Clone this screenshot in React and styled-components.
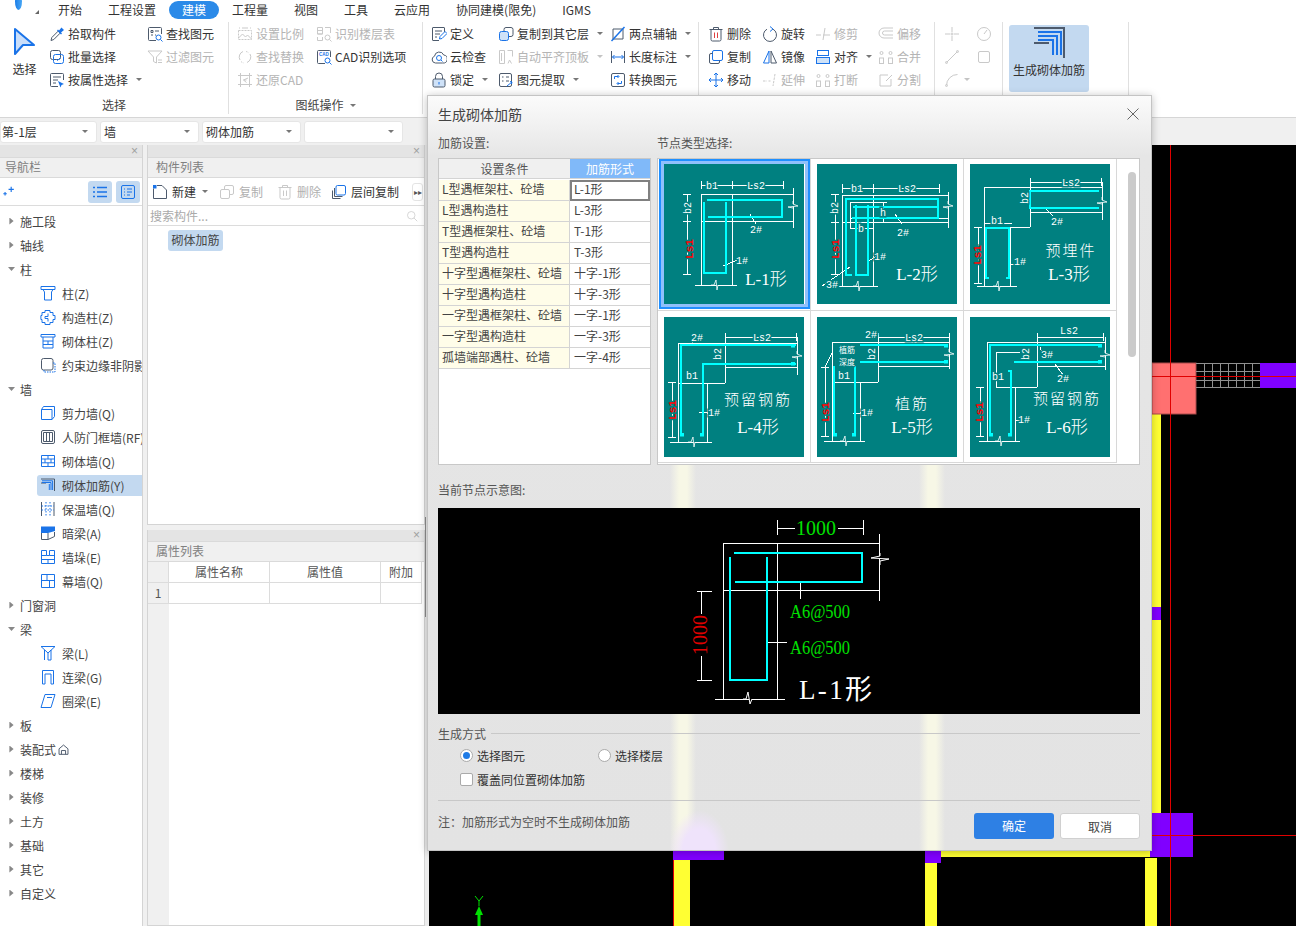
import React from 'react';
import styled, { createGlobalStyle } from 'styled-components';

const GlobalStyle = createGlobalStyle`
  html, body { margin: 0; padding: 0; background: #f0f0f0; }
  body { font-family: "Noto Sans CJK SC", "Liberation Sans", sans-serif; font-size: 12px; color: #333; }
  *, *::before, *::after { box-sizing: border-box; }
`;

const ICONS = {
  pick: <><path d="M2 14.5l.8-3 6.4-6.4 2 2-6.4 6.4z" /><path className="f" d="M9 3.5l1 1 2.5-3 2.5 2.5-3 2.5 1 1-1 1-4-4z" /></>,
  batch: <><rect x="1.5" y="1.5" width="10" height="9" rx="2" /><rect className="a" x="4.5" y="5.5" width="10" height="9" rx="2" /><path className="a" d="M7 10l1.5 1.5 3-3" /></>,
  attr: <><path d="M9 14.5H2.5a1 1 0 0 1-1-1v-11a1 1 0 0 1 1-1h11a1 1 0 0 1 1 1V8" /><path d="M4 5h8M4 8h5M4 11h3" /><path className="f" d="M9 9l6 3-2.5 1-1 2.5z" /></>,
  find: <><path d="M9 14.5H2.5a1 1 0 0 1-1-1v-11a1 1 0 0 1 1-1h11a1 1 0 0 1 1 1V8" /><path d="M4 4.5h2v2H4zM8 5h4M4 9h2M8 9h1" /><circle className="a" cx="11.5" cy="11.5" r="2.5" /><path className="a" d="M13.5 13.5l2 2" /></>,
  filter: <><path d="M1 2h14l-5.5 6v6l-3-1.5V8z" /><path d="M11 11h4M11 13.5h4" /></>,
  scale: <><path strokeDasharray="2 1" d="M1.5 4.5h13v9h-13z" /><path d="M1.5 12l4-4 3 3 2-2 4 4" /><path d="M2 2h1M13 2h1M5 2h6" /></>,
  replace: <><path d="M3 11A6 6 0 0 1 6 2.5M13 5a6 6 0 0 1-3 8.5" /><path strokeDasharray="1.5 1.5" d="M9 2.5a6 6 0 0 1 3 1.5M4 12.5A6 6 0 0 0 7 14" /></>,
  restore: <><path d="M1 3.5h14M1 12.5h14M3.5 1v14M12.5 1v14" /><path d="M11 6L6.5 8l3 2.5M6.5 8h3" /></>,
  layer: <><path d="M1.5 8V1.5h5V8zM1.5 4.5h5M9 1.5h5.5V7M1.5 11v3.5h5V11M1.5 8h5" /><circle cx="11.5" cy="11.5" r="2.5" /><path d="M13.5 13.5l2 2" /></>,
  cad: <><path d="M9 14.5H2.5a1 1 0 0 1-1-1v-11a1 1 0 0 1 1-1h11a1 1 0 0 1 1 1V8" /><text x="3" y="7" fontSize="4.5" fontWeight="700" fill="#1a73e8" stroke="none" fontFamily="Liberation Sans, sans-serif">CAD</text><circle className="a" cx="11.5" cy="11.5" r="2.5" /><path className="a" d="M13.5 13.5l2 2" /></>,
  define: <><path d="M13.5 6V2a.5.5 0 0 0-.5-.5H2a.5.5 0 0 0-.5.5v12a.5.5 0 0 0 .5.5h6" /><path d="M4 5h7M4 8h5M4 11h2" /><path className="a" d="M8.5 13l.5-2.5 5-5 2 2-5 5z" /></>,
  cloud: <><path d="M4.5 14a3.5 3.5 0 0 1-1-6.8A4.8 4.8 0 0 1 12.7 6a4 4 0 0 1-1 8z" /><circle className="a" cx="8" cy="9" r="2.5" /><path className="a" d="M10 11l1.5 1.5" /></>,
  lock: <><path d="M4.5 7V4.5a3.5 3.5 0 0 1 7 0V7" /><rect x="2" y="7" width="12" height="8" rx="1.5" fill="#cfe2f8" /><path className="a" d="M8 10v2.5" /></>,
  copyLayer: <><rect x="6" y="1.5" width="9" height="9" rx="2" /><rect className="a" x="1.5" y="5.5" width="9" height="9" rx="2" fill="#cfe2f8" /></>,
  alignTop: <><path d="M1.5 1.5h5v13h-5zM9.5 1.5h5v6M3.5 4v8M11.5 11l-1.5 3.5M11.5 11l2 3.5" /></>,
  extract: <><rect x="1.5" y="1.5" width="12" height="13" rx="1.5" /><path d="M4 5h1.5M8 5h3M4 9h1.5M8 9h3" /><path className="a" d="M9 14l5-4M12 9.5l2 .5-.5 2" /></>,
  twoAxis: <><path d="M3 3h10v10H3z" /><path className="a" d="M1.5 15L14.5 1" strokeWidth="1.5" /></>,
  lengthDim: <><path d="M1.5 2v12M14.5 2v12" /><path className="a" d="M2.5 8h11M4.5 6L2.5 8l2 2M11.5 6l2 2-2 2" /></>,
  convert: <><rect x="1.5" y="1.5" width="13" height="13" rx="1.5" /><path className="a" d="M4.5 7V4.5h4M7.5 3l1.5 1.5L7.5 6M11.5 9v2.5h-4M8.5 10L7 11.5 8.5 13" /></>,
  del: <><path d="M3 4v9.5a1.5 1.5 0 0 0 1.5 1.5h7a1.5 1.5 0 0 0 1.5-1.5V4M1.5 3.5h13M5.5 3.5V1.5h5v2" /><path stroke="#e04040" d="M6.5 6.5V12M9.5 6.5V12" /></>,
  trash: <><path d="M3 4v9.5a1.5 1.5 0 0 0 1.5 1.5h7a1.5 1.5 0 0 0 1.5-1.5V4M1.5 3.5h13M5.5 3.5V1.5h5v2M6.5 6.5V12M9.5 6.5V12" /></>,
  copy: <><rect className="a" x="4.5" y="1.5" width="10" height="10" rx="1.5" /><path d="M4.5 4.5H3A1.5 1.5 0 0 0 1.5 6v7A1.5 1.5 0 0 0 3 14.5h7a1.5 1.5 0 0 0 1.5-1.5v-1.5" /></>,
  copyOff: <><rect x="5.5" y="1.5" width="9" height="9" rx="1.5" /><rect x="1.5" y="5.5" width="9" height="9" rx="1.5" fill="#fff" /></>,
  move: <><path className="a" d="M8 1v14M1 8h14M6 3l2-2 2 2M6 13l2 2 2-2M3 6L1 8l2 2M13 6l2 2-2 2" /></>,
  rotate: <><path d="M5 3.2A6.5 6.5 0 1 0 11 3.2" /><path className="a" d="M8 .5l3 2.5-3 2.5" /></>,
  mirror: <><path className="a" d="M7 2L1.5 14H7z" /><path d="M9 2l5.5 12H9z" /></>,
  extend: <><path d="M1 9h4M6.5 9h2M13 2L11 14" strokeDasharray="2.5 1" /></>,
  trim: <><path d="M1 9h5M8 9h7M10 2L8 14" /></>,
  alignBox: <><rect className="a" x="2.5" y="1.5" width="11" height="5" /><rect className="a" x="1.5" y="8.5" width="13" height="6" fill="#cfe2f8" /></>,
  brk: <><circle cx="3.5" cy="4" r="1.5" /><circle cx="12.5" cy="4" r="1.5" /><rect x="1.5" y="9" width="4" height="5.5" /><rect x="10.5" y="9" width="4" height="5.5" /></>,
  offset: <><path d="M15 2H6a5 5 0 0 0 0 10h9M15 5H6.5a2 2 0 0 0 0 4H15" /></>,
  split: <><path d="M10 3H2v11h11V7M8 9l6-6" /></>,
  cross: <><path d="M8 1v5M8 10v5M1 8h5M10 8h5" /><circle cx="8" cy="8" r="1" /></>,
  dial: <><circle cx="8" cy="8" r="6.5" /><path d="M8 8l3-4" /></>,
  line: <><path d="M2.5 13.5L13.5 2.5" /><circle cx="2.5" cy="13.5" r="1" /><circle cx="13.5" cy="2.5" r="1" /></>,
  square: <><rect x="2.5" y="2.5" width="11" height="11" rx="1.5" /></>,
  arc: <><path d="M2.5 13.5A11 11 0 0 1 13.5 2.5" /><circle cx="2.5" cy="13.5" r="1" /></>,
  plus: <><path className="a" d="M10.5 2v6M7.5 5h6M3.5 8v4M1.5 10h4" strokeWidth="1.3" /></>,
  newDoc: <><path d="M1.5 4.5v10h13V6L10 1.5H5" /><path className="f" d="M1 1h3.5v3.5H1z" /></>,
  floor: <><rect className="a" x="5" y="1.5" width="9.5" height="9.5" rx="1.5" /><path d="M3.5 4v8.5h8M1.5 6.5v8h8" /></>,
  listView: <><path className="a" d="M5 3.5h10M5 8h10M5 12.5h10M1 3.5h2M1 8h2M1 12.5h2" strokeWidth="1.3" /></>,
  detailView: <><rect className="a" x="1.5" y="1.5" width="13" height="13" rx="1.5" /><path className="a" d="M4 5h1M7 5h5M4 8h1M7 8h5M4 11h1M7 11h3" /></>,
  column: <><path className="a" d="M1 1.5h14v3H1zM3 4.5L4.5 7v8h7V7L13 4.5" /></>,
  structCol: <><path className="a" d="M5 1.5h5v2h3v3h2v4h-2v3h-3v2H5v-2H2v-3H.9v-4H2v-3h3zM8 4.5v3H5v2h3v3" /></>,
  masonry: <><path className="a" d="M1 1.5h14V4H1zM3 4v11h10V4M3 8h10M3 11.5h10M8 8v3.5" /></>,
  boundary: <><rect x="1.5" y="1.5" width="11.5" height="11.5" rx="2" /><path className="a" d="M13 6h2v9H4v-2" strokeDasharray="1.5 1" /></>,
  shear: <><path className="a" d="M1.5 4.5H12v10H1.5zM1.5 4.5l2-3h11v10l-2.5 3" /></>,
  rf: <><rect x="1.5" y="1.5" width="13" height="13" rx="1.5" /><path d="M3.5 3.5h9v9h-9zM6.5 3.5v9M9.5 3.5v9" /></>,
  brick: <><path className="a" d="M1.5 2.5h13v11h-13zM1.5 6h13M1.5 9.8h13M8 2.5V6M5 6v3.8M11 6v3.8M8 9.8v3.7" /></>,
  rebar: <><path d="M1 2h13.5v12M1 6h5" /><path className="a" d="M2 3.8h10.6V13M2 5.5h9V13M9.3 7v6" /></>,
  insul: <><path d="M1.5 1v14M14 1v14" /><path className="a" strokeDasharray="1.5 1.5" d="M6 1v14M10 1v14M1.5 5H14M1.5 9H14" /></>,
  darkBeam: <><path d="M1.5 6.5v8H8l6.5-3V7" /><path d="M8 14.5V8" /><path className="f" d="M1 1.5h14V6L8 8H1z" /></>,
  pier: <><path className="a" d="M1.5 1.5h5v5h3v-5h5v13h-13zM1.5 6.5h5M9.5 6.5h5M1.5 10.5h13M8 10.5v4" /></>,
  curtain: <><path className="a" d="M1.5 1.5h13v13h-13zM1.5 7.5h13M7 1.5v6M9.5 7.5v7" /></>,
  beam: <><path className="a" d="M1 1.5h14L8 8zM4.5 5v10M11 5L8 8v7h3z" /></>,
  link: <><path className="a" d="M2.5 15V1.5h11V15M2.5 15H5V5h6v10h2.5" /></>,
  ring: <><path className="a" d="M5 1.5h10L11 14.5H1zM7 4.5h5" /></>,
  house: <><path d="M1.5 7L8 1.5 14.5 7v8h-13zM5 15V9.5h6V15" strokeWidth="1.4" /></>,
  search: <><circle cx="7" cy="7" r="5" /><path d="M10.5 10.5L15 15" /></>,
};

const IconSvg = styled.svg`
  width: ${p => p.$size || 16}px;
  height: ${p => p.$size || 16}px;
  flex: none;
  fill: none;
  stroke: currentColor;
  color: ${p => (p.$off ? '#c9c9c9' : '#4d5a6c')};
  .a { stroke: ${p => (p.$off ? '#c9c9c9' : '#1a73e8')}; }
  .f { fill: ${p => (p.$off ? '#c9c9c9' : '#1a73e8')}; stroke: none; }
`;

const Icon = ({ name, off, size }) => (
  <IconSvg viewBox="0 0 16 16" $off={off} $size={size}>{ICONS[name]}</IconSvg>
);

const Page = styled.div`
  position: relative;
  width: 1296px;
  height: 926px;
  overflow: hidden;
  display: flex;
  flex-direction: column;
  background: #f0f0f0;
`;

/* top menu */
const MenuBar = styled.div`
  height: 19px;
  flex: none;
  display: flex;
  align-items: center;
  background: #fff;
  line-height: 18px;
`;

const Logo = styled.div`
  position: relative;
  width: 45px;
  height: 19px;
  flex: none;
  overflow: hidden;
  &::before {
    content: '';
    position: absolute;
    left: 15px;
    top: -3px;
    width: 7px;
    height: 13px;
    border-radius: 50% 50% 50% 50% / 35% 35% 65% 65%;
    background: linear-gradient(90deg, #1a7de8, #4aa8f5);
  }
  &::after {
    content: '';
    position: absolute;
    left: 35px;
    top: 10px;
    border-left: 4px solid transparent;
    border-bottom: 4px solid #666;
  }
`;

const MenuItem = styled.div`
  height: 18px;
  padding: 0 13px;
  white-space: nowrap;
  border-radius: 9px;
  color: ${p => (p.$active ? '#fff' : '#333')};
  background: ${p => (p.$active ? '#2b8ae8' : 'transparent')};
`;

/* ribbon */
const Ribbon = styled.div`
  height: 99px;
  flex: none;
  display: flex;
  padding-top: 3px;
  background: #fff;
  border-bottom: 1px solid #d6d6d6;
`;

const RibbonGroup = styled.div`
  width: ${p => p.$w}px;
  height: 92px;
  flex: none;
  padding-left: ${p => p.$pad || 0}px;
  border-right: 1px solid #e0e0e0;
  position: relative;
  display: flex;
`;

const GroupName = styled.div`
  position: absolute;
  left: 0;
  right: 0;
  bottom: 0;
  height: 18px;
  line-height: 18px;
  text-align: center;
  color: #444;
  display: flex;
  justify-content: center;
  align-items: center;
  gap: 6px;
`;

const ToolColumn = styled.div`
  width: ${p => p.$w}px;
  flex: none;
  display: flex;
  flex-direction: column;
`;

const ToolRow = styled.div`
  height: 23px;
  display: flex;
  align-items: center;
  gap: 3px;
  white-space: nowrap;
  color: ${p => (p.$off ? '#b4b4b4' : '#333')};
`;

const Caret = styled.span`
  display: inline-block;
  margin-left: ${p => p.$gap ?? 5}px;
  flex: none;
  border-left: 3px solid transparent;
  border-right: 3px solid transparent;
  border-top: 3px solid ${p => (p.$off ? '#c4c4c4' : '#777')};
`;

const BigSelect = styled.div`
  width: 49px;
  flex: none;
  padding-top: 4px;
  display: flex;
  flex-direction: column;
  align-items: center;
  gap: 4px;
`;

const BigSelectArrow = styled.svg`
  width: 26px;
  height: 30px;
`;

const BigAction = styled.div`
  width: 80px;
  height: 67px;
  margin-top: 3px;
  border-radius: 3px;
  background: #c3d9f0;
  display: flex;
  flex-direction: column;
  align-items: center;
  padding-top: 1px;
  gap: 3px;
  white-space: nowrap;
  color: #333;
`;

const BigActionIcon = styled.svg`
  width: 36px;
  height: 32px;
  fill: none;
`;

const Tool = ({ icon, label, off, caret }) => (
  <ToolRow $off={off}>
    <Icon name={icon} off={off} />
    {label}
    {caret && <Caret $off={off} />}
  </ToolRow>
);

const IconOnly = ({ icon, caret }) => (
  <ToolRow $off>
    <Icon name={icon} off />
    {caret && <Caret $off $gap={1} />}
  </ToolRow>
);

/* selector row */
const ComboRow = styled.div`
  height: 27px;
  flex: none;
  display: flex;
  align-items: flex-start;
  gap: 3px;
  padding-top: 3px;
  background: #f0f0f0;
`;

const Combo = styled.div`
  width: ${p => p.$w || 99}px;
  height: 22px;
  padding: 0 8px 2px ${p => p.$pad || 3}px;
  background: #fff;
  border-radius: 3px;
  border: 1px solid #e6e6e6;
  display: flex;
  align-items: center;
  justify-content: space-between;
  line-height: 17px;
`;

/* main area */
const Main = styled.div`
  flex: 1;
  min-height: 0;
  display: flex;
  background: #f0f0f0;
`;

const NavPanel = styled.div`
  width: 143px;
  flex: none;
  margin-right: 4px;
  display: flex;
  flex-direction: column;
  background: #fff;
  border-right: 1px solid #d4d4d4;
`;

const MiddleColumn = styled.div`
  width: 278px;
  flex: none;
  display: flex;
  flex-direction: column;
  gap: 5px;
`;

const Panel = styled.div`
  height: ${p => (p.$h ? `${p.$h}px` : 'auto')};
  flex: ${p => (p.$h ? 'none' : '1')};
  min-height: 0;
  display: flex;
  flex-direction: column;
  background: #fff;
  border-left: 1px solid #d4d4d4;
  border-right: 1px solid #d4d4d4;
  border-bottom: 1px solid #d4d4d4;
`;

const Grip = styled.div`
  height: ${p => p.$h || 12}px;
  flex: none;
  padding-right: 4px;
  background: #e4e4e4;
  color: #a0a0a0;
  font-family: "Liberation Sans", sans-serif;
  font-size: 12px;
  line-height: ${p => p.$h || 12}px;
  text-align: right;
`;

const PanelTitle = styled.div`
  height: 21px;
  flex: none;
  padding-left: ${p => p.$pad || 8}px;
  line-height: 18px;
  background: #f0f0f0;
  color: #808080;
  border-top: 1px solid #dadada;
  border-bottom: 1px solid #dadada;
`;

const PanelBar = styled.div`
  height: 28px;
  flex: none;
  display: flex;
  align-items: center;
  position: relative;
  border-bottom: 1px solid #dcdcdc;
  padding: 0 2px 0 ${p => p.$pad || 4}px;
`;

const ViewToggle = styled.div`
  width: 24px;
  height: 22px;
  display: flex;
  align-items: center;
  justify-content: center;
  margin-left: 4px;
  border-radius: 3px;
  background: #c3d9f0;
`;

const Spacer = styled.div`
  flex: 1;
`;

const BarItem = styled.div`
  width: ${p => p.$w}px;
  flex: none;
  display: flex;
  align-items: center;
  gap: 4px;
  white-space: nowrap;
  color: ${p => (p.$off ? '#b0b0b0' : '#333')};
`;

const MoreButton = styled.div`
  width: 11px;
  height: 18px;
  flex: none;
  border: 1px solid #e4e4e4;
  border-radius: 3px;
  font-size: 8px;
  line-height: 16px;
  text-align: center;
  color: #555;
`;

const SearchRow = styled.div`
  height: 19px;
  flex: none;
  margin-top: 1px;
  padding: 0 6px 0 2px;
  display: flex;
  align-items: center;
  justify-content: space-between;
  line-height: 18px;
  color: #aaa;
  border-bottom: 1px solid #dcdcdc;
`;

const ListArea = styled.div`
  flex: 1;
  padding: 4px 0 0 20px;
`;

const Chip = styled.div`
  width: 55px;
  height: 21px;
  line-height: 20px;
  text-align: center;
  border-radius: 3px;
  background: #c3d9f0;
  color: #444;
`;

const Tree = styled.div`
  flex: 1;
  padding-top: 3px;
  overflow: hidden;
`;

const TreeRow = styled.div`
  height: 24px;
  display: flex;
  align-items: center;
  padding-left: ${p => (p.$leaf ? 40 : 8)}px;
  gap: ${p => (p.$leaf ? 6 : 5)}px;
  white-space: nowrap;
  overflow: hidden;
  color: #444;
  position: relative;
  &::before {
    content: '';
    display: ${p => (p.$sel ? 'block' : 'none')};
    position: absolute;
    left: 37px;
    right: 0;
    top: 2px;
    bottom: 1px;
    background: #c3d9f0;
    border-radius: 3px 0 0 3px;
  }
  & > * { position: relative; }
`;

const Twisty = styled.span`
  width: 7px;
  height: 7px;
  flex: none;
  ${p => (p.$open
    ? 'clip-path: polygon(0 20%, 100% 20%, 50% 80%);'
    : 'clip-path: polygon(20% 0, 80% 50%, 20% 100%);')}
  background: #888;
`;

const TreeText = styled.span`
  position: relative;
  display: inline-flex;
  align-items: center;
  gap: 2px;
`;

const Splitter = styled.div`
  width: 4px;
  flex: none;
  padding-top: 372px;
  background: #ececec;
  &::before {
    content: '';
    display: block;
    width: 1px;
    height: 100px;
    background: #8c8c8c;
  }
`;

const Canvas = styled.div`
  flex: 1;
  background: #000;
`;

const CanvasSvg = styled.svg`
  display: block;
  width: 867px;
  height: 781px;
`;

/* property table */
const PropGrid = styled.div`
  flex: 1;
  display: grid;
  grid-template-columns: 21px 101px 111px 41px;
  grid-template-rows: 21px 21px 1fr;
`;

const PropCell = styled.div`
  border-right: 1px solid #dcdcdc;
  border-bottom: 1px solid #dcdcdc;
  line-height: 20px;
  text-align: center;
  color: #555;
  background: ${p => (p.$gutter ? '#f0f0f0' : '#fff')};
`;

const PropFiller = styled.div`
  background: #f0f0f0;
`;

/* dialog */
const Dialog = styled.div`
  position: absolute;
  left: 427px;
  top: 95px;
  width: 725px;
  height: 756px;
  padding: 0 11px 0 10px;
  display: flex;
  flex-direction: column;
  border: 1px solid #c4c4c4;
  box-shadow: 0 1px 8px rgba(0, 0, 0, .25);
  background:
    radial-gradient(ellipse 30px 42px at 50% 100%, #efe3fb 55%, rgba(239, 227, 251, 0)) 241px 712px / 60px 44px no-repeat,
    linear-gradient(90deg, transparent, #f7f7e6 35%, #f7f7e6 65%, transparent) 242px 368px / 26px 388px no-repeat,
    linear-gradient(90deg, transparent, #f7f7e6 35%, #f7f7e6 65%, transparent) 491px 368px / 26px 388px no-repeat,
    linear-gradient(180deg, #fbfbfb 0, #f1f1f1 30px, #e6e6e6 60px, #e3e3e3 100%);
  color: #444;
`;

const DialogTitle = styled.div`
  height: 36px;
  flex: none;
  display: flex;
  align-items: center;
  justify-content: space-between;
  font-size: 14px;
  color: #444;
`;

const CloseMark = styled.svg`
  width: 12px;
  height: 12px;
  margin-right: 1px;
  stroke: #666;
  fill: none;
`;

const SetupArea = styled.div`
  display: grid;
  grid-template-columns: 213px 483px;
  grid-template-rows: 26px 307px;
  column-gap: 6px;
  flex: none;
`;

const FieldLabel = styled.div`
  flex: none;
  line-height: 20px;
  color: #555;
  padding-top: ${p => p.$top ?? 1}px;
  margin-bottom: ${p => p.$bottom || 0}px;
`;

const RuleTable = styled.div`
  border: 1px solid #c8c8c8;
  background: #fff;
  display: grid;
  grid-template-columns: 131px 80px;
  grid-auto-rows: 21px;
`;

const RuleHead = styled.div`
  height: 20px;
  line-height: 20px;
  text-align: center;
  color: ${p => (p.$blue ? '#fff' : '#555')};
  background: ${p => (p.$blue ? '#80b9f9' : '#f0f0f0')};
  border-bottom: 1px solid #d4d4d4;
  margin-bottom: -1px;
`;

const RuleCond = styled.div`
  padding-left: 3px;
  line-height: 18px;
  white-space: nowrap;
  background: #fffde9;
  border-right: 1px solid #d4d4d4;
  border-bottom: 1px solid #d4d4d4;
`;

const RuleForm = styled.div`
  padding-left: ${p => (p.$sel ? 2 : 4)}px;
  line-height: ${p => (p.$sel ? 14 : 18)}px;
  background: #fff;
  border-bottom: 1px solid #d4d4d4;
  ${p => p.$sel && 'border: 2px solid #808080;'}
`;

const NodeBox = styled.div`
  position: relative;
  border: 1px solid #c8c8c8;
  background: #fff;
  overflow: hidden;
`;

const NodeGrid = styled.div`
  width: 459px;
  display: grid;
  grid-template-columns: repeat(3, 153px);
  grid-template-rows: 152px 152px;
`;

const NodeCell = styled.div`
  padding: ${p => p.$pt}px 0 0 6px;
  border-right: 1px solid #d8d8d8;
  border-bottom: 1px solid #d8d8d8;
  position: relative;
  &::before {
    content: '';
    display: ${p => (p.$sel ? 'block' : 'none')};
    position: absolute;
    left: 1px;
    top: 0;
    width: 151px;
    height: 150px;
    border: 2px solid #1f8fff;
    box-shadow: inset 0 0 0 3px #8fc0fb;
  }
`;

const NodeSvg = styled.svg`
  display: block;
  position: relative;
  width: 140px;
  height: 140px;
  background: #008080;
`;

const ScrollThumb = styled.div`
  position: absolute;
  right: 3px;
  top: 13px;
  width: 8px;
  height: 185px;
  border-radius: 4px;
  background: #cbcbcb;
`;

const PreviewBox = styled.svg`
  display: block;
  flex: none;
  width: 702px;
  height: 206px;
  background: #000;
`;

const GroupHead = styled.div`
  margin-top: 9px;
  height: 20px;
  flex: none;
  display: flex;
  align-items: center;
  gap: 5px;
  color: #555;
  &::after {
    content: '';
    flex: 1;
    height: 1px;
    background: #c8c8c8;
  }
`;

const OptionRow = styled.div`
  height: 24px;
  flex: none;
  padding-left: ${p => p.$pad}px;
  display: flex;
  align-items: center;
  color: #333;
`;

const RadioItem = styled.div`
  width: 138px;
  display: flex;
  align-items: center;
  gap: 4px;
`;

const RadioDot = styled.span`
  width: 13px;
  height: 13px;
  flex: none;
  border-radius: 50%;
  border: 1px solid #aaa;
  background: #fff;
  display: flex;
  align-items: center;
  justify-content: center;
  &::after {
    content: '';
    display: ${p => (p.$on ? 'block' : 'none')};
    width: 7px;
    height: 7px;
    border-radius: 50%;
    background: #1f7be6;
  }
`;

const CheckBox = styled.span`
  width: 13px;
  height: 13px;
  flex: none;
  margin-right: 4px;
  border: 1px solid #aaa;
  border-radius: 2px;
  background: #fff;
`;

const Rule = styled.div`
  height: 1px;
  flex: none;
  margin-top: 9px;
  background: #c8c8c8;
`;

const DialogFoot = styled.div`
  flex: 1;
  display: flex;
  justify-content: space-between;
  align-items: flex-start;
  padding-top: 12px;
`;

const Note = styled.div`
  line-height: 18px;
  color: #555;
`;

const FootButtons = styled.div`
  display: flex;
  gap: 6px;
`;

const Button = styled.div`
  width: 80px;
  height: 26px;
  line-height: 26px;
  text-align: center;
  border-radius: 3px;
  color: ${p => (p.$primary ? '#fff' : '#444')};
  background: ${p => (p.$primary ? '#2e80e4' : '#fff')};
  border: ${p => (p.$primary ? 'none' : '1px solid #d0d0d0')};
`;

const NOTE_TEXT = '注\uFF1A加筋形式为空时不生成砌体加筋';

const RULES = [
  ['L型遇框架柱、砼墙', 'L-1形'],
  ['L型遇构造柱', 'L-3形'],
  ['T型遇框架柱、砼墙', 'T-1形'],
  ['T型遇构造柱', 'T-3形'],
  ['十字型遇框架柱、砼墙', '十字-1形'],
  ['十字型遇构造柱', '十字-3形'],
  ['一字型遇框架柱、砼墙', '一字-1形'],
  ['一字型遇构造柱', '一字-3形'],
  ['孤墙端部遇柱、砼墙', '一字-4形'],
];

const TREE = [
  { t: '施工段' }, { t: '轴线' }, { t: '柱', open: true },
  { t: '柱(Z)', i: 'column' }, { t: '构造柱(Z)', i: 'structCol' }, { t: '砌体柱(Z)', i: 'masonry' }, { t: '约束边缘非阴影区', i: 'boundary' },
  { t: '墙', open: true },
  { t: '剪力墙(Q)', i: 'shear' }, { t: '人防门框墙(RF)', i: 'rf' }, { t: '砌体墙(Q)', i: 'brick' }, { t: '砌体加筋(Y)', i: 'rebar', sel: true },
  { t: '保温墙(Q)', i: 'insul' }, { t: '暗梁(A)', i: 'darkBeam' }, { t: '墙垛(E)', i: 'pier' }, { t: '幕墙(Q)', i: 'curtain' },
  { t: '门窗洞' }, { t: '梁', open: true },
  { t: '梁(L)', i: 'beam' }, { t: '连梁(G)', i: 'link' }, { t: '圈梁(E)', i: 'ring' },
  { t: '板' }, { t: '装配式', house: true }, { t: '楼梯' }, { t: '装修' }, { t: '土方' }, { t: '基础' }, { t: '其它' }, { t: '自定义' },
];

// node drawings, local coordinates of a 140 x 140 tile
const NODES = [
  {
    white: ['37,17 37,25', '68,17 68,25', '119,17 119,25', '37,21 119,21', '37,30 129,30', '37,57 129,57', '37,30 37,121', '68,30 68,121', '31,121 73,121', '129,24 129,64', '23,30 23,110', '19,30 27,30', '19,57 27,57', '19,110 27,110', '86,50 92,60', '59,102 73,96'],
    cyan: ['43,36 118,36 118,53 44,53', '40,38 40,109 62,109 62,38'],
    text: [['b1', 48, 25], ['Ls2', 92, 25], ['b2', 24, 44, 1], ['Ls1', 26, 85, 1, 1], ['2#', 92, 69], ['1#', 78, 100]],
    cap: [['L-1形', 102, 121]],
    breaks: [[51, 121, 'b'], [129, 41, 'r']],
  },
  {
    white: ['25,20 25,29', '56,20 56,29', '122,20 122,29', '25,24 122,24', '25,31 131,31', '25,58 131,58', '25,31 25,122', '56,31 56,122', '20,122 61,122', '131,28 131,64', '33,38 33,64 56,64', '33,38 65,38', '33,54 131,54', '66,38 66,58', '62,38 70,38', '62,58 70,58', '18,30 18,110', '14,30 22,30', '14,58 22,58', '14,110 22,110', '78,50 85,60', '50,98 60,92', '5,122 33,103'],
    cyan: ['35,111 29,111 29,35 121,35 121,54 35,54', '36,43 121,43', '39,41 39,111 51,111 51,41'],
    text: [['b1', 40, 28], ['Ls2', 90, 28], ['b2', 18, 44, 1], ['Ls1', 19, 85, 1, 1], ['h', 66, 52], ['b', 44, 68], ['1#', 63, 96], ['2#', 86, 72], ['3#', 15, 124]],
    cap: [['L-2形', 100, 116]],
    breaks: [[40, 122, 'b'], [131, 41, 'r']],
  },
  {
    white: ['60,14 60,22', '131,14 131,22', '60,18 131,18', '14,23 132,23', '14,23 14,122', '60,18 60,63', '14,63 60,63', '40,63 40,122', '60,48 132,48', '7,122 47,122', '132,18 132,56', '8,63 8,119', '4,63 12,63', '4,119 12,119', '40,100 46,100', '75,44 83,52', '14,59 42,59'],
    cyan: ['19,114 16,114 16,64 39,64 39,114 36,114', '129,27 60,27 60,44 129,44'],
    text: [['Ls2', 101, 22], ['b1', 27, 60], ['b2', 55, 34, 1], ['Ls1', 8, 91, 1, 1], ['1#', 50, 101], ['2#', 87, 61]],
    cap: [['预埋件', 101, 92, 15], ['L-3形', 99, 116]],
    breaks: [[27, 122, 'b'], [132, 37, 'r']],
  },
  {
    white: ['61,16 61,24', '132,16 132,24', '61,20 132,20', '14,26 133,26', '14,26 14,125', '61,20 61,66', '14,66 61,66', '61,50 133,50', '43,66 43,125', '6,125 48,125', '133,20 133,58', '8,65 8,120', '4,65 12,65', '4,120 12,120', '35,95 43,95', '27,28 32,20'],
    cyan: ['17,118 17,28 132,28', '39,118 39,47 132,47'],
    dots: [[18, 118], [38, 118], [129, 29], [129, 47]],
    text: [['Ls2', 98, 24], ['2#', 33, 24], ['b2', 54, 37, 1], ['b1', 28, 62], ['Ls1', 9, 93, 1, 1], ['1#', 50, 99]],
    cap: [['预留钢筋', 94, 88, 15], ['L-4形', 94, 116]],
    breaks: [[28, 125, 'b'], [133, 38, 'r']],
  },
  {
    white: ['61,16 61,24', '132,16 132,24', '61,20 132,20', '15,25 132,25', '15,25 15,124', '61,20 61,65', '15,65 61,65', '61,49 132,49', '43,65 43,124', '7,124 48,124', '132,20 132,52', '8,50 8,119', '4,50 12,50', '4,119 12,119', '15,36 8,50', '36,96 43,96'],
    cyan: ['43,28 131,28', '43,45 131,45', '17,49 17,118', '38,49 38,118'],
    dots: [[18, 118], [37, 118], [129, 29], [129, 45]],
    text: [['Ls2', 97, 24], ['2#', 54, 21], ['b2', 55, 37, 1], ['b1', 27, 62], ['Ls1', 9, 95, 1, 1], ['1#', 50, 99]],
    small: [['植筋', 30, 36], ['深度', 30, 48]],
    cap: [['植筋', 95, 92, 15], ['L-5形', 95, 116]],
    breaks: [[27, 124, 'b'], [132, 36, 'r']],
  },
  {
    white: ['67,16 67,20', '133,16 133,24', '67,20 133,20', '17,25 135,25', '17,25 17,124', '67,20 67,70', '26,70 67,70', '26,35 26,70', '26,35 50,35', '67,49 135,49', '45,70 45,124', '9,124 50,124', '135,20 135,53', '10,70 10,119', '6,70 14,70', '6,119 14,119', '45,103 51,103', '70,30 72,36', '85,47 93,58'],
    cyan: ['23,118 20,118 20,28 132,28', '44,45 132,45', '38,54 41,54 41,118 38,118'],
    dots: [[21, 118], [40, 118], [130, 29], [130, 45]],
    text: [['Ls2', 99, 17], ['b1', 28, 63], ['b2', 56, 37, 1], ['3#', 77, 41], ['2#', 93, 65], ['1#', 54, 106], ['Ls1', 10, 95, 1, 1]],
    cap: [['预留钢筋', 97, 87, 15], ['L-6形', 97, 116]],
    breaks: [[29, 124, 'b'], [135, 37, 'r']],
  },
];

const breakPath = (x, y, kind) => (kind === 'b'
  ? `M${x - 4} ${y}H${x - 1}L${x + 1} ${y - 5}L${x + 2} ${y + 5}L${x + 3} ${y}`
  : `M${x} ${y - 4}V${y - 1}L${x + 5} ${y + 1}L${x - 5} ${y + 2}L${x} ${y + 3}`);

const SerifFont = '"Liberation Serif", "Noto Sans CJK SC", serif';
const MonoFont = '"Liberation Mono", monospace';
const CjkFont = '"Noto Sans CJK SC", sans-serif';

const NodeDrawing = ({ node }) => (
  <NodeSvg viewBox="0 0 140 140">
    {node.white.map((pts, i) => (
      <polyline key={i} points={pts} fill="none" stroke="#fff" strokeWidth="1" shapeRendering="crispEdges" />
    ))}
    {node.breaks.map(([x, y, k], i) => (
      <path key={i} d={breakPath(x, y, k)} fill="#008080" stroke="#fff" strokeWidth=".8" />
    ))}
    {node.cyan.map((pts, i) => (
      <polyline key={i} points={pts} fill="none" stroke="#00ffff" strokeWidth="2" />
    ))}
    {(node.dots || []).map(([x, y], i) => (
      <rect key={i} x={x - 2} y={y - 2} width="4" height="3.5" fill="#00ffff" />
    ))}
    {node.text.map(([t, x, y, rot, red], i) => (
      <text
        key={i}
        x={x}
        y={y}
        textAnchor="middle"
        fontFamily={MonoFont}
        fontSize={red ? 11 : 10}
        fontWeight={red ? 700 : 400}
        fill={red ? '#ff0000' : '#fff'}
        stroke="#008080"
        strokeWidth="3"
        paintOrder="stroke"
        transform={rot ? `rotate(-90 ${x} ${y}) translate(0 3)` : undefined}
      >
        {t}
      </text>
    ))}
    {(node.small || []).map(([t, x, y], i) => (
      <text key={i} x={x} y={y} textAnchor="middle" fontFamily={CjkFont} fontSize="8" fill="#fff" stroke="#008080" strokeWidth="2" paintOrder="stroke">{t}</text>
    ))}
    {node.cap.map(([t, x, y, size], i) => (
      <text key={i} x={x} y={y} textAnchor="middle" fontFamily={size ? CjkFont : SerifFont} fontWeight={300} fontSize={size || 17} letterSpacing={size ? 2 : 0} fill="#fff">{t}</text>
    ))}
  </NodeSvg>
);

// preview drawn in page coordinates
const PreviewDrawing = () => (
  <PreviewBox viewBox="438 508 702 206">
    <g stroke="#fff" strokeWidth="1" fill="none" shapeRendering="crispEdges">
      <path d="M777 520V535M863 520V535M777 528H795M838 528H863" />
      <path d="M723 543H879M723 590H879M723 543V699M777 543V699M715 699H785M879 534V601" />
      <path d="M697 591H712M697 680H712M701 591V614M701 656V680" />
      <path d="M800 582V599M768 642H787" />
    </g>
    <path d="M743 699H746L748 692L750 704L752 699" stroke="#fff" fill="#000" />
    <path d="M880 553V556L871 558L889 559L880 561V565" stroke="#fff" fill="#000" />
    <path d="M734 553H862V582H735M730 557V680H767V557" stroke="#00ffff" strokeWidth="2" fill="none" />
    <text x="816" y="535" textAnchor="middle" fontFamily={SerifFont} fontSize="20" fill="#00e000">1000</text>
    <text x="790" y="618" fontFamily={SerifFont} fontSize="19" textLength="60" lengthAdjust="spacingAndGlyphs" fill="#00e000">A6@500</text>
    <text x="790" y="654" fontFamily={SerifFont} fontSize="19" textLength="60" lengthAdjust="spacingAndGlyphs" fill="#00e000">A6@500</text>
    <text x="707" y="635" textAnchor="middle" transform="rotate(-90 707 635)" fontFamily={SerifFont} fontSize="20" fill="#e00000">1000</text>
    <text x="799" y="699" fontFamily={SerifFont} fontSize="27" textLength="73" fill="#fff">L-1形</text>
  </PreviewBox>
);

// CAD model on the drawing canvas, page coordinates
const CadDrawing = () => (
  <CanvasSvg viewBox="429 145 867 781">
    <path fill="#ffff33" d="M1152 414h9v399h-9zM673 860h17v66h-17zM925 863h12v63h-12zM1145 858h12v68h-12zM938 851h212v6H938z" />
    <path fill="#8000ff" d="M1152 607h9v13h-9zM1260 363h36v25h-36zM1150 813h43v44h-43zM673 851h51v9h-51zM925 851h16v12h-16z" />
    <rect x="1152" y="363" width="44" height="51" fill="#ff7070" stroke="#a84a4a" />
    <g stroke="#909090" shapeRendering="crispEdges">
      <path d="M1196 363.5h64M1196 371.5h64M1196 380.5h64M1196 387.5h64" />
      <path d="M1204.5 363v25M1212.5 363v25M1220.5 363v25M1228.5 363v25M1236.5 363v25M1244.5 363v25M1252.5 363v25" />
    </g>
    <g stroke="#e00000" shapeRendering="crispEdges">
      <path d="M1170.5 145v781M1152 376.5h144M1152 835.5h144M673.5 860v66" />
    </g>
    <path d="M479 926V914" stroke="#00e000" strokeWidth="3" />
    <path d="M479 906l4 9h-8z" fill="#00e000" />
    <path d="M475 896l4 5 4-5M479 901v5" stroke="#00e000" fill="none" />
  </CanvasSvg>
);

export default function App() {
  return (
    <Page>
      <GlobalStyle />
      <MenuBar>
        <Logo />
        {['开始', '工程设置', '建模', '工程量', '视图', '工具', '云应用', '协同建模(限免)', 'IGMS'].map(m => (
          <MenuItem key={m} $active={m === '建模'}>{m}</MenuItem>
        ))}
      </MenuBar>

      <Ribbon>
        <RibbonGroup $w={229}>
          <BigSelect>
            <BigSelectArrow viewBox="0 0 26 30">
              <path d="M3 3L22 19H11L3 28z" fill="#c9defa" stroke="#1a73e8" strokeWidth="2" strokeLinejoin="round" />
            </BigSelectArrow>
            选择
          </BigSelect>
          <ToolColumn $w={98}>
            <Tool icon="pick" label="拾取构件" />
            <Tool icon="batch" label="批量选择" />
            <Tool icon="attr" label="按属性选择" caret />
          </ToolColumn>
          <ToolColumn $w={80}>
            <Tool icon="find" label="查找图元" />
            <Tool icon="filter" label="过滤图元" off />
          </ToolColumn>
          <GroupName>选择</GroupName>
        </RibbonGroup>
        <RibbonGroup $w={194} $pad={8}>
          <ToolColumn $w={79}>
            <Tool icon="scale" label="设置比例" off />
            <Tool icon="replace" label="查找替换" off />
            <Tool icon="restore" label="还原CAD" off />
          </ToolColumn>
          <ToolColumn $w={100}>
            <Tool icon="layer" label="识别楼层表" off />
            <Tool icon="cad" label="CAD识别选项" />
          </ToolColumn>
          <GroupName>图纸操作<Caret $gap={0} /></GroupName>
        </RibbonGroup>
        <RibbonGroup $w={276} $pad={8}>
          <ToolColumn $w={67}>
            <Tool icon="define" label="定义" />
            <Tool icon="cloud" label="云检查" />
            <Tool icon="lock" label="锁定" caret />
          </ToolColumn>
          <ToolColumn $w={112}>
            <Tool icon="copyLayer" label="复制到其它层" caret />
            <Tool icon="alignTop" label="自动平齐顶板" off caret />
            <Tool icon="extract" label="图元提取" caret />
          </ToolColumn>
          <ToolColumn $w={84}>
            <Tool icon="twoAxis" label="两点辅轴" caret />
            <Tool icon="lengthDim" label="长度标注" caret />
            <Tool icon="convert" label="转换图元" />
          </ToolColumn>
        </RibbonGroup>
        <RibbonGroup $w={236} $pad={9}>
          <ToolColumn $w={54}>
            <Tool icon="del" label="删除" />
            <Tool icon="copy" label="复制" />
            <Tool icon="move" label="移动" />
          </ToolColumn>
          <ToolColumn $w={53}>
            <Tool icon="rotate" label="旋转" />
            <Tool icon="mirror" label="镜像" />
            <Tool icon="extend" label="延伸" off />
          </ToolColumn>
          <ToolColumn $w={63}>
            <Tool icon="trim" label="修剪" off />
            <Tool icon="alignBox" label="对齐" caret />
            <Tool icon="brk" label="打断" off />
          </ToolColumn>
          <ToolColumn $w={50}>
            <Tool icon="offset" label="偏移" off />
            <Tool icon="brk" label="合并" off />
            <Tool icon="split" label="分割" off />
          </ToolColumn>
        </RibbonGroup>
        <RibbonGroup $w={68} $pad={9}>
          <ToolColumn $w={32}>
            <IconOnly icon="cross" />
            <IconOnly icon="line" />
            <IconOnly icon="arc" caret />
          </ToolColumn>
          <ToolColumn $w={20}>
            <IconOnly icon="dial" />
            <IconOnly icon="square" />
          </ToolColumn>
        </RibbonGroup>
        <RibbonGroup $w={126} $pad={6}>
          <BigAction>
            <BigActionIcon viewBox="0 0 36 32">
              <path d="M3 2H33V32M3 17H18" stroke="#4d5a6c" strokeWidth="2" />
              <path d="M7 6H30V29M7 10H26V29M7 14H22V29" stroke="#1a73e8" strokeWidth="2" />
            </BigActionIcon>
            生成砌体加筋
          </BigAction>
        </RibbonGroup>
      </Ribbon>

      <ComboRow>
        <Combo $w={97} $pad={1}>第-1层<Caret /></Combo>
        <Combo>墙<Caret /></Combo>
        <Combo>砌体加筋<Caret /></Combo>
        <Combo><span /><Caret /></Combo>
      </ComboRow>

      <Main>
        <NavPanel>
          <Grip>×</Grip>
          <PanelTitle $pad={5}>导航栏</PanelTitle>
          <PanelBar $pad={2}>
            <Icon name="plus" size={14} />
            <Spacer />
            <ViewToggle><Icon name="listView" /></ViewToggle>
            <ViewToggle><Icon name="detailView" /></ViewToggle>
          </PanelBar>
          <Tree>
            {TREE.map(row => (
              <TreeRow key={row.t} $leaf={!!row.i} $sel={row.sel}>
                {row.i ? <Icon name={row.i} /> : <Twisty $open={row.open} />}
                <TreeText>
                  {row.t}
                  {row.house && <Icon name="house" size={11} />}
                </TreeText>
              </TreeRow>
            ))}
          </Tree>
        </NavPanel>

        <MiddleColumn>
          <Panel $h={380}>
            <Grip>×</Grip>
            <PanelTitle>构件列表</PanelTitle>
            <PanelBar>
              <BarItem $w={67}><Icon name="newDoc" />新建<Caret $gap={2} /></BarItem>
              <BarItem $w={58} $off><Icon name="copyOff" off />复制</BarItem>
              <BarItem $w={54} $off><Icon name="trash" off />删除</BarItem>
              <BarItem $w={81}><Icon name="floor" />层间复制</BarItem>
              <MoreButton>▸▸</MoreButton>
            </PanelBar>
            <SearchRow>
              搜索构件...
              <IconSvg viewBox="0 0 16 16" $off $size={12}>{ICONS.search}</IconSvg>
            </SearchRow>
            <ListArea><Chip>砌体加筋</Chip></ListArea>
          </Panel>
          <Panel>
            <Grip $h={11}>×</Grip>
            <PanelTitle>属性列表</PanelTitle>
            <PropGrid>
              <PropCell $gutter />
              <PropCell>属性名称</PropCell>
              <PropCell>属性值</PropCell>
              <PropCell>附加</PropCell>
              <PropCell $gutter>1</PropCell>
              <PropCell />
              <PropCell />
              <PropCell />
              <PropFiller />
            </PropGrid>
          </Panel>
        </MiddleColumn>

        <Splitter />
        <Canvas><CadDrawing /></Canvas>
      </Main>

      <Dialog>
        <DialogTitle>
          生成砌体加筋
          <CloseMark viewBox="0 0 12 12"><path d="M.5.5l11 11M11.5.5l-11 11" /></CloseMark>
        </DialogTitle>
        <SetupArea>
          <FieldLabel>加筋设置:</FieldLabel>
          <FieldLabel>节点类型选择:</FieldLabel>
          <RuleTable>
            <RuleHead>设置条件</RuleHead>
            <RuleHead $blue>加筋形式</RuleHead>
            {RULES.map(([cond, form], i) => (
              <React.Fragment key={cond}>
                <RuleCond>{cond}</RuleCond>
                <RuleForm $sel={i === 0}>{form}</RuleForm>
              </React.Fragment>
            ))}
          </RuleTable>
          <NodeBox>
            <NodeGrid>
              {NODES.map((node, i) => (
                <NodeCell key={i} $sel={i === 0} $pt={i < 3 ? 5 : 6}>
                  <NodeDrawing node={node} />
                </NodeCell>
              ))}
            </NodeGrid>
            <ScrollThumb />
          </NodeBox>
        </SetupArea>
        <FieldLabel $top={15} $bottom={8}>当前节点示意图:</FieldLabel>
        <PreviewDrawing />
        <GroupHead>生成方式</GroupHead>
        <OptionRow $pad={22}>
          <RadioItem><RadioDot $on />选择图元</RadioItem>
          <RadioItem><RadioDot />选择楼层</RadioItem>
        </OptionRow>
        <OptionRow $pad={22}><CheckBox />覆盖同位置砌体加筋</OptionRow>
        <Rule />
        <DialogFoot>
          <Note>{NOTE_TEXT}</Note>
          <FootButtons>
            <Button $primary>确定</Button>
            <Button>取消</Button>
          </FootButtons>
        </DialogFoot>
      </Dialog>
    </Page>
  );
}
